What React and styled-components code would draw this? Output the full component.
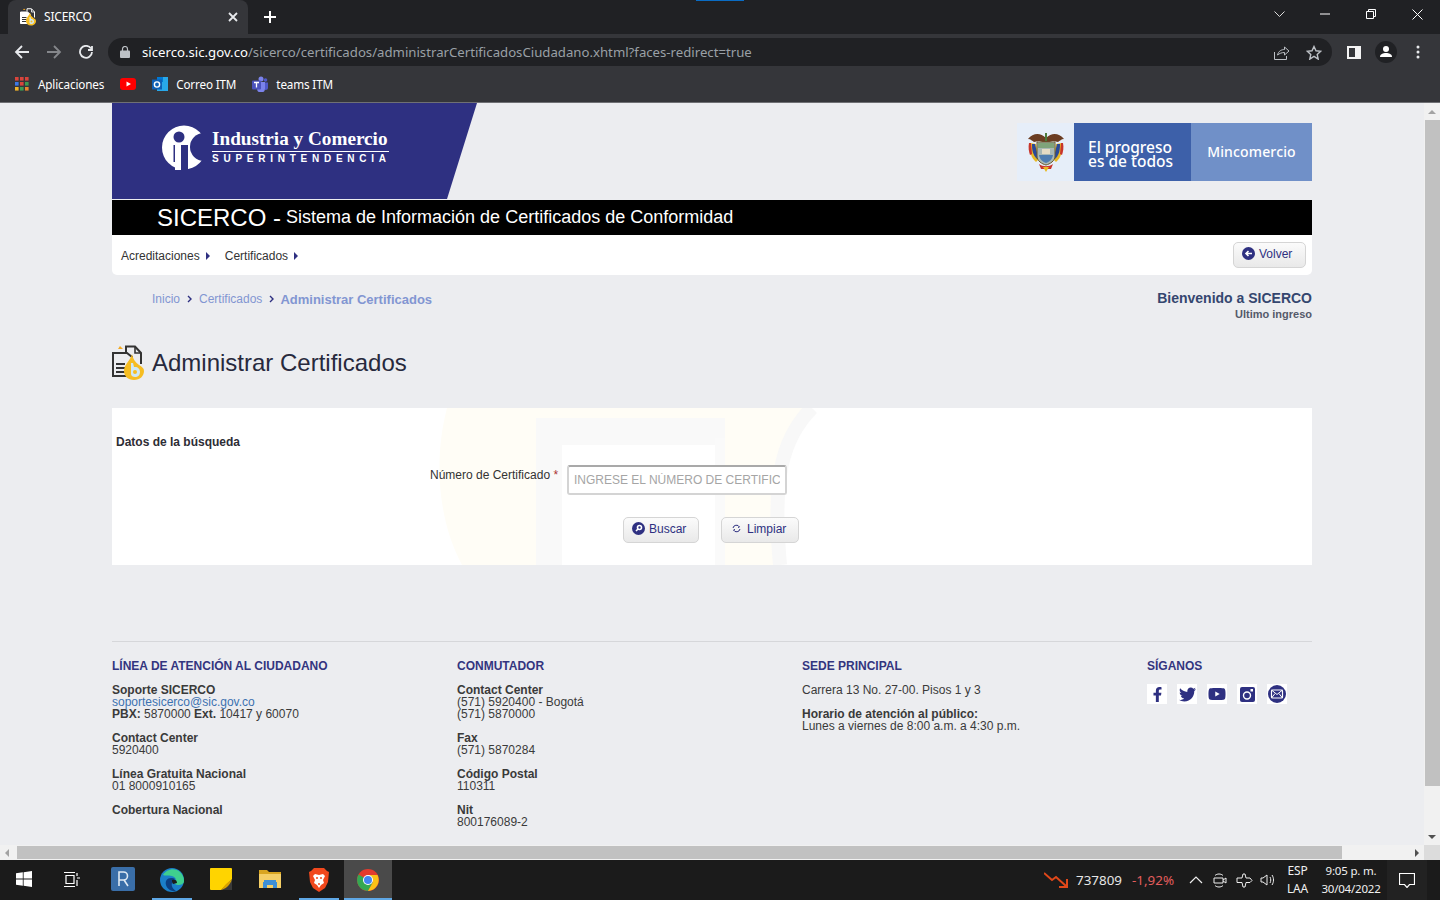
import React from 'react';
import styled, { createGlobalStyle } from 'styled-components';
import { FaFacebookF, FaTwitter, FaYoutube } from 'react-icons/fa';

const navy = '#2e3081';
const uiFont = '"Noto Sans", "Open Sans", sans-serif';
const pageFont = '"Liberation Sans", Arial, sans-serif';

const GlobalStyle = createGlobalStyle`
  html, body {
    margin: 0;
    padding: 0;
    width: 1440px;
    height: 900px;
    overflow: hidden;
    background: #ecedf0;
  }
  * { box-sizing: border-box; }
`;

const Screen = styled.div`
  position: relative;
  width: 1440px;
  height: 900px;
  display: flex;
  flex-direction: column;
  font-family: ${pageFont};
`;

/* browser chrome */
const TabStrip = styled.div`
  height: 34px;
  background: #202124;
  display: flex;
  align-items: flex-end;
  padding-left: 8px;
  color: #fff;
  font-family: ${uiFont};
`;
const Tab = styled.div`
  width: 240px;
  height: 34px;
  background: #35363a;
  border-radius: 8px 8px 0 0;
  display: flex;
  align-items: center;
  padding: 0 10px 1px 12px;
  font-size: 12px;
  gap: 8px;
`;
const TabTitle = styled.span`
  flex: 1;
  letter-spacing: -0.2px;
`;
const NewTab = styled.div`
  width: 44px;
  height: 34px;
  display: flex;
  align-items: center;
  justify-content: center;
`;
const WindowButtons = styled.div`
  margin-left: auto;
  height: 28px;
  display: flex;
  align-items: center;
  align-self: flex-start;
`;
const WindowButton = styled.div`
  width: 46px;
  height: 28px;
  display: flex;
  align-items: center;
  justify-content: center;
`;
const CaptureMark = styled.div`
  position: absolute;
  left: 696px;
  top: 0;
  width: 48px;
  height: 1px;
  background: #0a6cc4;
`;
const Toolbar = styled.div`
  height: 34px;
  background: #35363a;
  display: flex;
  align-items: center;
  padding: 2px 0 0 6px;
`;
const NavIcon = styled.div`
  width: 32px;
  height: 32px;
  display: flex;
  align-items: center;
  justify-content: center;
`;
const Omnibox = styled.div`
  width: 1224px;
  height: 28px;
  margin-left: 6px;
  background: #202124;
  border-radius: 14px;
  display: flex;
  align-items: center;
  padding: 0 2px 0 12px;
  font-family: ${uiFont};
  font-size: 13.2px;
  color: #9aa0a6;
`;
const UrlHost = styled.span`
  margin-left: 12px;
  color: #fff;
`;
const OmniSpacer = styled.div`
  flex: 1;
`;
const OmniIcon = styled.div`
  width: 32px;
  display: flex;
  justify-content: center;
`;
const ToolbarRight = styled.div`
  display: flex;
  align-items: center;
  margin-left: 6px;
`;
const Bookmarks = styled.div`
  height: 35px;
  background: #35363a;
  border-bottom: 1px solid #6f7074;
  display: flex;
  align-items: center;
  padding: 0 0 3px 15px;
  color: #fff;
  font-family: ${uiFont};
  font-size: 11.7px;
  letter-spacing: -0.15px;
`;
const Bookmark = styled.div`
  display: flex;
  align-items: center;
  gap: ${p => p.$inner || 8}px;
  margin-right: ${p => p.$gap}px;
  white-space: nowrap;
`;

/* viewport + scrollbars */
const Middle = styled.div`
  flex: 1;
  display: flex;
  min-height: 0;
`;
const Page = styled.main`
  flex: 1;
  background: #ecedf0;
  padding-left: 112px;
  overflow: hidden;
`;
const Container = styled.div`
  width: 1200px;
`;
const VScroll = styled.div`
  width: 16px;
  background: #f1f1f1;
  display: flex;
  flex-direction: column;
  align-items: center;
  padding: 7px 0 6px;
`;
const VThumb = styled.div`
  width: 15px;
  height: 666px;
  background: #c1c1c1;
  margin: 6px 0 auto;
`;
const HScrollRow = styled.div`
  height: 15px;
  display: flex;
  background: #f1f1f1;
`;
const HTrack = styled.div`
  width: 1424px;
  height: 15px;
  display: flex;
  align-items: center;
  justify-content: space-between;
  padding: 0 5px;
`;
const HThumb = styled.div`
  width: 1325px;
  height: 13px;
  background: #c1c1c1;
  margin-left: 3px;
  margin-right: 68px;
`;
const Corner = styled.div`
  width: 16px;
  background: #dcdcdc;
`;
const ArrowV = styled.div`
  width: 0;
  height: 0;
  border-left: 4px solid transparent;
  border-right: 4px solid transparent;
  ${p => p.$up ? 'border-bottom: 4px solid #a3a3a3;' : 'border-top: 4px solid #505050;'}
`;
const ArrowH = styled.div`
  width: 0;
  height: 0;
  border-top: 4px solid transparent;
  border-bottom: 4px solid transparent;
  ${p => p.$left ? 'border-right: 4px solid #a3a3a3;' : 'border-left: 4px solid #505050;'}
`;

/* site header */
const Masthead = styled.header`
  height: 97px;
  display: flex;
  justify-content: space-between;
`;
const Brand = styled.div`
  width: 365px;
  height: 96px;
  background: ${navy};
  clip-path: polygon(0 0, 100% 0, 335px 100%, 0 100%);
  display: flex;
  align-items: flex-start;
  padding: 22px 0 0 50px;
  color: #fff;
  gap: 8px;
`;
const BrandText = styled.div`
  display: flex;
  flex-direction: column;
  width: 177px;
  margin-top: 3px;
`;
const BrandName = styled.div`
  font-family: "Liberation Serif", serif;
  font-weight: 700;
  font-size: 19.2px;
  line-height: 22px;
  white-space: nowrap;
  border-bottom: 1px solid #fff;
  height: 24px;
`;
const BrandSub = styled.div`
  font-size: 10px;
  font-weight: 700;
  letter-spacing: 4.75px;
  line-height: 14px;
  white-space: nowrap;
`;
const GovBanner = styled.div`
  margin-top: 20px;
  height: 58px;
  display: flex;
  color: #fff;
  font-family: ${uiFont};
`;
const Emblem = styled.div`
  width: 57px;
  background: #e6eef9;
  display: flex;
  align-items: center;
  justify-content: center;
`;
const Slogan = styled.div`
  width: 117px;
  background: #3d60a9;
  padding: 17px 0 0 14px;
  font-size: 15.5px;
  font-weight: 500;
  line-height: 14px;
`;
const Ministry = styled.div`
  width: 121px;
  background: #7090c8;
  display: flex;
  align-items: center;
  justify-content: center;
  padding-bottom: 2px;
  font-size: 14px;
  letter-spacing: 0.15px;
  font-weight: 500;
`;
const BlackBar = styled.div`
  height: 35px;
  background: #000;
  color: #fff;
  display: flex;
  align-items: center;
  padding-left: 45px;
  font-size: 18px;
  white-space: pre;
`;
const BarTitle = styled.span`
  font-size: 24px;
`;
const NavBar = styled.nav`
  height: 40px;
  background: #fff;
  border-radius: 0 0 5px 5px;
  display: flex;
  align-items: center;
  padding: 0 6px 0 9px;
  font-size: 12px;
  color: #333;
`;
const NavItem = styled.span`
  display: flex;
  align-items: center;
  gap: 6px;
  margin-right: 15px;
  padding-top: 1px;
`;
const Caret = styled.span`
  width: 0;
  height: 0;
  border-top: 4px solid transparent;
  border-bottom: 4px solid transparent;
  border-left: 4px solid ${navy};
`;
const SoftButton = styled.button`
  width: ${p => p.$w}px;
  height: 26px;
  border: 1px solid #d5d5d5;
  border-radius: 5px;
  background: linear-gradient(#fbfbfb, #e9e9e9);
  color: ${navy};
  font-family: ${pageFont};
  font-size: 12px;
  display: flex;
  align-items: center;
  gap: 4px;
  padding: 0 0 3px 8px;
`;
const NavPush = styled.div`
  flex: 1;
`;

/* crumbs + title */
const CrumbRow = styled.div`
  height: 50px;
  display: flex;
  justify-content: space-between;
  align-items: flex-start;
`;
const Crumbs = styled.div`
  margin: 17px 0 0 40px;
  display: flex;
  align-items: center;
  font-size: 12px;
  height: 14px;
  color: #8296d2;
`;
const CrumbSep = styled.span`
  width: ${p => p.$w}px;
  display: flex;
  justify-content: center;
`;
const CrumbCurrent = styled.span`
  font-weight: 700;
  font-size: 13px;
`;
const Welcome = styled.div`
  margin-top: 15px;
  text-align: right;
`;
const WelcomeTitle = styled.div`
  font-size: 14px;
  font-weight: 700;
  line-height: 17px;
  color: #34466f;
`;
const WelcomeSub = styled.div`
  font-size: 11px;
  font-weight: 700;
  line-height: 15px;
  color: #555a6a;
`;
const TitleRow = styled.div`
  height: 83px;
  display: flex;
  align-items: flex-start;
  padding-top: 20px;
  gap: 8px;
`;
const PageTitle = styled.h1`
  margin: 3px 0 0;
  font-size: 24px;
  font-weight: 400;
  line-height: 30px;
  color: #27293d;
`;

/* form panel */
const Panel = styled.section`
  position: relative;
  height: 157px;
  background: #fff;
  overflow: hidden;
  padding: 27px 4px 0;
`;
const Watermark = styled.svg`
  position: absolute;
  left: 0;
  top: 0;
`;
const PanelBody = styled.div`
  position: relative;
`;
const PanelTitle = styled.div`
  font-size: 12px;
  font-weight: 700;
  line-height: 14px;
  color: #2d2d35;
`;
const FormRow = styled.div`
  display: flex;
  margin: 16px 0 0 314px;
`;
const FieldLabel = styled.label`
  font-size: 12px;
  line-height: 14px;
  padding-top: 3px;
  color: #333;
  width: 137px;
  white-space: pre;
`;
const Required = styled.span`
  color: #a33;
`;
const TextInput = styled.input`
  width: 220px;
  height: 30px;
  border: 2px solid #d4d4d4;
  border-top-color: #a9a9a9;
  border-radius: 3px;
  padding: 0 5px;
  font-family: ${pageFont};
  font-size: 12px;
  background: #fff;
  &::placeholder {
    color: #a5a5a5;
    opacity: 1;
  }
`;
const ButtonRow = styled.div`
  display: flex;
  gap: 22px;
  margin: 22px 0 0 507px;
`;

/* footer */
const Footer = styled.footer`
  margin-top: 76px;
  border-top: 1px solid #d6d7da;
  padding-top: 17px;
  display: grid;
  grid-template-columns: 345px 345px 345px 165px;
  font-size: 12px;
  line-height: 12px;
  color: #3a3a3a;
`;
const FooterHeading = styled.h4`
  margin: 0 0 11px;
  font-size: 12px;
  line-height: 14px;
  font-weight: 700;
  color: #33357f;
  text-transform: uppercase;
`;
const FooterGroup = styled.div`
  margin-bottom: 12px;
  white-space: nowrap;
`;
const Strong = styled.b`
  color: #3a3a3a;
  display: ${p => p.$inline ? 'inline' : 'block'};
`;
const MailLink = styled.a`
  display: block;
  color: #3c72b0;
`;
const SocialRow = styled.div`
  display: flex;
  gap: 10px;
  margin-top: 1px;
`;
const SocialIcon = styled.a`
  width: 20px;
  height: 20px;
  background: #fff;
  color: ${navy};
  display: flex;
  align-items: center;
  justify-content: center;
  font-size: ${p => p.$size || 15}px;
`;

/* windows taskbar */
const Taskbar = styled.div`
  height: 40px;
  background: #1b1b1b;
  display: flex;
  align-items: center;
  color: #fff;
  font-family: ${uiFont};
`;
const TaskSlot = styled.div`
  width: ${p => p.$w || 48}px;
  height: 40px;
  margin-left: ${p => p.$ml || 0}px;
  display: flex;
  align-items: center;
  justify-content: center;
  background: ${p => p.$active ? '#4a4a4a' : 'transparent'};
  border-bottom: 2px solid ${p => p.$open ? '#5fa8e6' : 'transparent'};
  padding-top: ${p => p.$open ? '2px' : '0'};
`;
const Tray = styled.div`
  margin-left: auto;
  display: flex;
  align-items: center;
  height: 40px;
`;
const Ticker = styled.span`
  font-size: 13.4px;
  margin-left: 7px;
  color: #e6e6e6;
`;
const TickerDelta = styled.span`
  font-size: 13.4px;
  margin-left: 10px;
  color: #e35d5d;
  width: 52px;
`;
const TrayIcon = styled.div`
  width: 24px;
  display: flex;
  justify-content: center;
`;
const TrayText = styled.div`
  width: ${p => p.$w}px;
  text-align: center;
  font-size: ${p => p.$size}px;
  line-height: 18px;
  letter-spacing: -0.2px;
  color: #f0f0f0;
`;
const Notify = styled.div`
  width: 40px;
  height: 40px;
  margin-right: 13px;
  background: #222;
  display: flex;
  align-items: center;
  justify-content: center;
`;

const DocIcon = ({ size = 32, light }) => {
  const ink = light ? '#fff' : '#333';
  return (
    <svg width={size} height={size * 36 / 32} viewBox="0 0 32 36" fill="none">
      <path d="M8 1l-2 3h5z" fill="#f2a922" />
      <path d="M14 7V1.5h9l6 6.5v11" stroke={ink} strokeWidth="2" fill="none" />
      <path d="M23 2v6h6" stroke={ink} strokeWidth="1.6" />
      <path d="M1 8h14l5 4v19H1z" stroke={ink} strokeWidth="2" fill={light ? '#fff' : 'none'} />
      <path d="M4 19h9M4 23h11M4 27h9" stroke={light ? '#333' : ink} strokeWidth="2" />
      <path d="M20 9c-1 6-8 10-8 17 0 5 4 9 10 9s10-4 10-9c0-3-2-4-5-6-4-3-6-6-7-11z" fill="#f6bd22" />
      <path d="M19 18v11c0 2 2 3 4 3 3 0 5-2 5-5s-2-5-5-5h-1l-1-4z" fill="#cfe8f5" />
      <circle cx="23" cy="27" r="2" fill="#f6bd22" />
    </svg>
  );
};

const ColombiaEmblem = () => (
  <svg width="40" height="42" viewBox="0 0 38 42">
    <path d="M19 7C13 1 6 2 1 8c3 0 4 2 6 3l5-1 7 2 7-2 5 1c2-1 3-3 6-3-5-6-12-7-18-1z" fill="#6b3d22" />
    <path d="M18 2h2v8h-2z" fill="#4a7a3a" />
    <path d="M3 12c-1 8 1 15 6 19l3-3-3-15z" fill="#e8b923" />
    <path d="M35 12c1 8-1 15-6 19l-3-3 3-15z" fill="#e8b923" />
    <path d="M5 13c0 7 1 11 5 15l1-2-3-13z" fill="#2a4a9a" />
    <path d="M33 13c0 7-1 11-5 15l-1-2 3-13z" fill="#2a4a9a" />
    <path d="M2 12c-1 5 0 9 1 12l2-1-1-11z" fill="#c8352c" />
    <path d="M36 12c1 5 0 9-1 12l-2-1 1-11z" fill="#c8352c" />
    <path d="M10 11h18v14c0 5-5 8-9 9-4-1-9-4-9-9z" fill="#a9b8b4" stroke="#6b5a2c" strokeWidth="1" />
    <path d="M11 12h16v5H11z" fill="#7fa37a" />
    <path d="M12 24h14c-1 5-4 7-7 8-3-1-6-3-7-8z" fill="#4f7db0" />
    <path d="M15 18h8v5h-8z" fill="#e5dcc4" />
    <path d="M12 33c4 3 10 3 14 0l-2 5h-10z" fill="#c8352c" />
    <path d="M16 36h6l-3 5z" fill="#e8b923" />
  </svg>
);

const SiteLogo = () => (
  <svg width="42" height="45" viewBox="0 0 42 45">
    <circle cx="22" cy="22.5" r="22" fill="#fff" />
    <circle cx="42" cy="22" r="14" fill={navy} />
    <circle cx="17" cy="12" r="5.500" fill={navy} />
    <rect x="11.500" y="20" width="1.500" height="17" fill={navy} />
    <rect x="19" y="20" width="7" height="25" fill={navy} />
    <rect x="13" y="37" width="6" height="8" fill="#fff" />
  </svg>
);

const Line = ({ d, w = 16, h = 16, color = '#fff', sw = 2, vb }) => (
  <svg width={w} height={h} viewBox={vb || `0 0 ${w} ${h}`} fill="none" stroke={color} strokeWidth={sw}>
    <path d={d} />
  </svg>
);

const AppsGrid = () => {
  const colors = ['#d9453c', '#d9453c', '#d9453c', '#3b78e7', '#d9453c', '#3b9a52', '#f0b429', '#3b9a52', '#e8862e'];
  return (
    <svg width="14" height="14" viewBox="0 0 14 14">
      {colors.map((c, i) => (
        <rect key={i} x={(i % 3) * 5} y={Math.floor(i / 3) * 5} width="3.6" height="3.6" fill={c} />
      ))}
    </svg>
  );
};

const YoutubeMark = () => (
  <svg width="16" height="12" viewBox="0 0 16 12">
    <rect width="16" height="12" rx="3" fill="#f00" />
    <path d="M6.500 3.500L11 6l-4.500 2.500z" fill="#fff" />
  </svg>
);

const OutlookMark = () => (
  <svg width="16" height="16" viewBox="0 0 16 16">
    <rect x="5" y="1" width="11" height="14" fill="#28a8ea" />
    <rect x="5" y="1" width="6" height="5" fill="#0078d4" />
    <rect x="0" y="3.500" width="10" height="10" fill="#0f5fb5" />
    <circle cx="5" cy="8.500" r="2.600" fill="none" stroke="#fff" strokeWidth="1.400" />
  </svg>
);

const TeamsMark = () => (
  <svg width="16" height="16" viewBox="0 0 16 16">
    <circle cx="9" cy="3" r="2.500" fill="#7b83eb" />
    <circle cx="13.500" cy="4" r="1.800" fill="#5059c9" />
    <path d="M11 6.500h5v5a2.500 2.500 0 0 1-5 0z" fill="#5059c9" />
    <path d="M5 6h8v6.500a4 4 0 0 1-8 0z" fill="#7b83eb" />
    <rect x="0" y="4.500" width="9" height="9" rx="1" fill="#4b53bc" />
    <path d="M2 6.500h5M4.500 6.500v5" stroke="#fff" strokeWidth="1.300" />
  </svg>
);

const RoundGlyph = ({ d }) => (
  <svg width="13" height="13" viewBox="0 0 13 13">
    <circle cx="6.500" cy="6.500" r="6.500" fill={navy} />
    <path d={d} fill="none" stroke="#fff" strokeWidth="1.600" />
  </svg>
);

const WinLogo = () => (
  <svg width="16" height="16" viewBox="0 0 16 16" fill="#fff">
    <path d="M0 2.300l6.800-1v6.300H0zM7.600 1.200L16 0v7.600H7.600zM0 8.400h6.800v6.300l-6.800-1zM7.600 8.400H16V16l-8.400-1.200z" />
  </svg>
);

const RStudio = () => (
  <svg width="24" height="24" viewBox="0 0 24 24">
    <rect width="24" height="24" rx="2" fill="#3a6ea8" />
    <path d="M8 19V5h4.500a4 4 0 0 1 0 8H8M13 13l4 6" fill="none" stroke="#dfe9f3" strokeWidth="1.600" />
  </svg>
);

const EdgeMark = () => (
  <svg width="24" height="24" viewBox="0 0 24 24">
    <circle cx="12" cy="12" r="12" fill="#1b7fc9" />
    <path d="M3 7c3-6 12-8 17-3 3 3 4 6 4 9 0 3-3 4-6 4-2 0-3-1-3-2 2-2 1-6-3-7-4-1-7 0-9-1z" fill="#3fcf8e" />
    <path d="M11 10c-4 0-6 3-5 7s6 7 10 6c-3-2-5-5-4-8 1-2 2-3 3-4-1-1-2-1-4-1z" fill="#0c3f82" />
    <path d="M12 12c3-1 5 0 5 3l-4 1c-1-1-1-3-1-4z" fill="#1b1b1b" />
  </svg>
);

const StickyNote = () => (
  <svg width="22" height="22" viewBox="0 0 22 22">
    <rect width="22" height="22" rx="1" fill="#ffd400" />
    <path d="M11 22l11-11v11z" fill="#3a3a3a" />
    <path d="M11 22c4-1 9-4 11-11l-6 5z" fill="#d9a300" />
  </svg>
);

const Explorer = () => (
  <svg width="22" height="20" viewBox="0 0 22 20">
    <path d="M0 1h8l2 2h12v16H0z" fill="#d9a520" />
    <path d="M0 5h22v14H0z" fill="#f5cf66" />
    <path d="M4 13h14v6h-4v-3H8v3H4z" fill="#3d8fd6" />
    <path d="M5 11h12v2H5z" fill="#3d8fd6" />
  </svg>
);

const Brave = () => (
  <svg width="20" height="24" viewBox="0 0 20 24">
    <path d="M5 0h10l3 3 2 1-1 10-3 6-6 4-6-4-3-6L0 4l2-1z" fill="#f1481d" />
    <path d="M6 6l4 1 4-1 2 2-2 4 1 3-3 2-2 3-2-3-3-2 1-3-2-4z" fill="#fff" />
    <path d="M7 10h2M11 10h2M10 15v2" stroke="#f1481d" strokeWidth="1.400" />
  </svg>
);

const ChromeMark = () => (
  <svg width="22" height="22" viewBox="0 0 22 22">
    <circle cx="11" cy="11" r="11" fill="#e33b2e" />
    <path d="M11 11L1.500 5.500A11 11 0 0 0 11 22l5-9z" fill="#34a853" />
    <path d="M11 6h9.500A11 11 0 0 1 11 22l5-9z" fill="#fbc116" />
    <circle cx="11" cy="11" r="5" fill="#fff" />
    <circle cx="11" cy="11" r="4" fill="#4285f4" />
  </svg>
);

export default function App() {
  return (
    <Screen>
      <GlobalStyle />
      <CaptureMark />

      <TabStrip>
        <Tab>
          <DocIcon size={16} light />
          <TabTitle>SICERCO</TabTitle>
          <Line w={10} h={10} sw={1.800} color="#e8eaed" d="M1 1l8 8M9 1l-8 8" />
        </Tab>
        <NewTab>
          <Line w={12} h={12} sw={2} d="M6 0v12M0 6h12" />
        </NewTab>
        <WindowButtons>
          <WindowButton><Line w={11} h={7} sw={1} color="#dcdcdc" d="M.5.500l5 5 5-5" /></WindowButton>
          <WindowButton><Line w={10} h={2} sw={1} d="M0 1h10" /></WindowButton>
          <WindowButton><Line w={10} h={10} sw={1} d="M.5 2.500h7v7h-7zM2.500 2.500v-2h7v7h-2" /></WindowButton>
          <WindowButton><Line w={11} h={11} sw={1} d="M.5.500l10 10M10.500.500l-10 10" /></WindowButton>
        </WindowButtons>
      </TabStrip>

      <Toolbar>
        <NavIcon><Line w={16} h={14} sw={1.800} color="#e8eaed" d="M15 7H2M8 1L2 7l6 6" /></NavIcon>
        <NavIcon><Line w={16} h={14} sw={1.800} color="#85878b" d="M1 7h13M8 1l6 6-6 6" /></NavIcon>
        <NavIcon><Line w={14} h={14} sw={1.800} color="#e8eaed" d="M12 3.500A6 6 0 1 0 13 7M13 1v4H9" /></NavIcon>
        <Omnibox>
          <svg width="10" height="12" viewBox="0 0 10 12">
            <rect y="4.500" width="10" height="7.500" rx="1" fill="#bdc1c6" />
            <path d="M2.500 5V3a2.500 2.500 0 0 1 5 0v2" fill="none" stroke="#bdc1c6" strokeWidth="1.200" />
          </svg>
          <UrlHost>sicerco.sic.gov.co</UrlHost>
          /sicerco/certificados/administrarCertificadosCiudadano.xhtml?faces-redirect=true
          <OmniSpacer />
          <OmniIcon>
            <Line w={16} h={15} sw={1} color="#bdc1c6" d="M.5 7v7.500h12V11M3.500 10c1-4 4-5.500 7-5.500V2L15 6l-4.500 4V7.500c-3 0-5 1-7 2.500z" />
          </OmniIcon>
          <OmniIcon>
            <Line w={16} h={15} sw={1.400} color="#bdc1c6" d="M8 1.500l2 4.300 4.700.5-3.500 3.200 1 4.600L8 11.300l-4.200 2.800 1-4.600L1.300 6.300 6 5.800z" />
          </OmniIcon>
        </Omnibox>
        <ToolbarRight>
          <NavIcon>
            <svg width="14" height="13" viewBox="0 0 14 13">
              <rect width="14" height="13" fill="#f4f4f4" />
              <rect x="2" y="2" width="6" height="9" fill="#35363a" />
            </svg>
          </NavIcon>
          <NavIcon>
            <svg width="22" height="22" viewBox="0 0 22 22">
              <circle cx="11" cy="11" r="11" fill="#202124" />
              <circle cx="11" cy="8" r="3" fill="#fff" />
              <path d="M5 16c0-3 3-4 6-4s6 1 6 4z" fill="#fff" />
            </svg>
          </NavIcon>
          <NavIcon>
            <svg width="4" height="14" viewBox="0 0 4 14" fill="#e8eaed">
              <circle cx="2" cy="2" r="1.500" /><circle cx="2" cy="7" r="1.500" /><circle cx="2" cy="12" r="1.500" />
            </svg>
          </NavIcon>
        </ToolbarRight>
      </Toolbar>

      <Bookmarks>
        <Bookmark $gap={16} $inner={9}><AppsGrid />Aplicaciones</Bookmark>
        <Bookmark $gap={16}><YoutubeMark /></Bookmark>
        <Bookmark $gap={16}><OutlookMark />Correo ITM</Bookmark>
        <Bookmark $gap={0}><TeamsMark />teams ITM</Bookmark>
      </Bookmarks>

      <Middle>
        <Page>
          <Container>
            <Masthead>
              <Brand>
                <SiteLogo />
                <BrandText>
                  <BrandName>Industria y Comercio</BrandName>
                  <BrandSub>SUPERINTENDENCIA</BrandSub>
                </BrandText>
              </Brand>
              <GovBanner>
                <Emblem><ColombiaEmblem /></Emblem>
                <Slogan>El progreso<br />es de todos</Slogan>
                <Ministry>Mincomercio</Ministry>
              </GovBanner>
            </Masthead>

            <BlackBar><BarTitle>SICERCO -</BarTitle> Sistema de Información de Certificados de Conformidad</BlackBar>

            <NavBar>
              <NavItem>Acreditaciones <Caret /></NavItem>
              <NavItem>Certificados <Caret /></NavItem>
              <NavPush />
              <SoftButton type="button" $w={73}>
                <RoundGlyph d="M10 6.500H4M6.500 4L4 6.500 6.500 9" />
                Volver
              </SoftButton>
            </NavBar>

            <CrumbRow>
              <Crumbs>
                Inicio
                <CrumbSep $w={19}><Line w={5} h={8} sw={1.400} color={navy} d="M1 1l3 3-3 3" /></CrumbSep>
                Certificados
                <CrumbSep $w={18}><Line w={5} h={8} sw={1.400} color={navy} d="M1 1l3 3-3 3" /></CrumbSep>
                <CrumbCurrent>Administrar Certificados</CrumbCurrent>
              </Crumbs>
              <Welcome>
                <WelcomeTitle>Bienvenido a SICERCO</WelcomeTitle>
                <WelcomeSub>Ultimo ingreso</WelcomeSub>
              </Welcome>
            </CrumbRow>

            <TitleRow>
              <DocIcon size={32} />
              <PageTitle>Administrar Certificados</PageTitle>
            </TitleRow>

            <Panel>
              <Watermark width="1200" height="157" viewBox="0 0 1200 157">
                <path d="M335 0h365c-30 30-40 70-32 157H350C325 110 322 50 335 0z" fill="#fffdf6" />
                <path d="M424 10h189v147H424z" fill="#f9f9f9" />
                <path d="M450 37h153v120H450z" fill="#fff" />
                <path d="M603 30h10v127h-10z" fill="#fafafa" />
                <path d="M700 0c-30 30-40 70-32 157" fill="none" stroke="#f8f8f8" strokeWidth="14" />
              </Watermark>
              <PanelBody>
                <PanelTitle>Datos de la búsqueda</PanelTitle>
                <FormRow>
                  <FieldLabel>Número de Certificado <Required>*</Required></FieldLabel>
                  <TextInput placeholder="INGRESE EL NÚMERO DE CERTIFICADO" />
                </FormRow>
                <ButtonRow>
                  <SoftButton type="button" $w={76}>
                    <RoundGlyph d="M4 9l2-2M7.500 5.500m-2 0a2 2 0 1 0 4 0a2 2 0 1 0-4 0" />
                    Buscar
                  </SoftButton>
                  <SoftButton type="button" $w={78}>
                    <svg width="13" height="13" viewBox="0 0 13 13" fill="none" stroke={navy} strokeWidth="1">
                      <path d="M3 6a3.500 3.500 0 0 1 6.500-1L8 5.500M10 7a3.500 3.500 0 0 1-6.500 1L5 7.500" />
                    </svg>
                    Limpiar
                  </SoftButton>
                </ButtonRow>
              </PanelBody>
            </Panel>

            <Footer>
              <div>
                <FooterHeading>Línea de atención al ciudadano</FooterHeading>
                <FooterGroup>
                  <Strong>Soporte SICERCO</Strong>
                  <MailLink>soportesicerco@sic.gov.co</MailLink>
                  <Strong $inline>PBX:</Strong> 5870000 <Strong $inline>Ext.</Strong> 10417 y 60070
                </FooterGroup>
                <FooterGroup><Strong>Contact Center</Strong>5920400</FooterGroup>
                <FooterGroup><Strong>Línea Gratuita Nacional</Strong>01 8000910165</FooterGroup>
                <FooterGroup><Strong>Cobertura Nacional</Strong></FooterGroup>
              </div>
              <div>
                <FooterHeading>Conmutador</FooterHeading>
                <FooterGroup><Strong>Contact Center</Strong>(571) 5920400 - Bogotá<br />(571) 5870000</FooterGroup>
                <FooterGroup><Strong>Fax</Strong>(571) 5870284</FooterGroup>
                <FooterGroup><Strong>Código Postal</Strong>110311</FooterGroup>
                <FooterGroup><Strong>Nit</Strong>800176089-2</FooterGroup>
              </div>
              <div>
                <FooterHeading>Sede principal</FooterHeading>
                <FooterGroup>Carrera 13 No. 27-00. Pisos 1 y 3</FooterGroup>
                <FooterGroup><Strong>Horario de atención al público:</Strong>Lunes a viernes de 8:00 a.m. a 4:30 p.m.</FooterGroup>
              </div>
              <div>
                <FooterHeading>Síganos</FooterHeading>
                <SocialRow>
                  <SocialIcon><FaFacebookF /></SocialIcon>
                  <SocialIcon $size={17}><FaTwitter /></SocialIcon>
                  <SocialIcon $size={18}><FaYoutube /></SocialIcon>
                  <SocialIcon>
                    <svg width="15" height="15" viewBox="0 0 15 15">
                      <rect width="15" height="15" rx="2" fill={navy} />
                      <circle cx="7" cy="8.500" r="3.500" fill="none" stroke="#fff" strokeWidth="1.400" />
                      <rect x="10.500" y="2" width="2.500" height="2.500" fill="#fff" />
                    </svg>
                  </SocialIcon>
                  <SocialIcon>
                    <svg width="18" height="18" viewBox="0 0 18 18">
                      <circle cx="9" cy="9" r="9" fill={navy} />
                      <rect x="3.500" y="5" width="11" height="8" rx="1" fill="none" stroke="#fff" strokeWidth="1.200" />
                      <path d="M3.500 5L9 9.500 14.500 5M3.500 13L7 8.500M14.500 13L11 8.500" fill="none" stroke="#fff" strokeWidth="1" />
                    </svg>
                  </SocialIcon>
                </SocialRow>
              </div>
            </Footer>
          </Container>
        </Page>
        <VScroll>
          <ArrowV $up />
          <VThumb />
          <ArrowV />
        </VScroll>
      </Middle>

      <HScrollRow>
        <HTrack>
          <ArrowH $left />
          <HThumb />
          <ArrowH />
        </HTrack>
        <Corner />
      </HScrollRow>

      <Taskbar>
        <TaskSlot><WinLogo /></TaskSlot>
        <TaskSlot>
          <Line w={16} h={15} sw={1.200} d="M0 .5h11M0 14.500h11M2 3.500h8v8H2zM13 1v3M13 6h3M13 8v6" />
        </TaskSlot>
        <TaskSlot $w={54}><RStudio /></TaskSlot>
        <TaskSlot $w={40} $ml={2} $open><EdgeMark /></TaskSlot>
        <TaskSlot $w={58}><StickyNote /></TaskSlot>
        <TaskSlot $w={40}><Explorer /></TaskSlot>
        <TaskSlot $w={40} $ml={9} $open><Brave /></TaskSlot>
        <TaskSlot $ml={5} $active $open><ChromeMark /></TaskSlot>
        <Tray>
          <Line w={25} h={17} sw={2} color="#e0481a" d="M0 1l8 7 4-3 10 9M23 7v8h-8" />
          <Ticker>737809</Ticker>
          <TickerDelta>-1,92%</TickerDelta>
          <TrayIcon><Line w={14} h={8} sw={1.200} color="#eee" d="M1 7l6-6 6 6" /></TrayIcon>
          <TrayIcon><Line w={14} h={15} sw={1} color="#eee" d="M2 2.500c2-2 6-2 8 0M2 12.500c2 2 6 2 8 0M1 5h9v5H1zM10 7l3-2v5l-3-2" /></TrayIcon>
          <TrayIcon><Line w={17} h={15} sw={1} color="#eee" d="M1 5h5L7 1h2l1 4h4l2 2.500-2 2h-4l-1 4.500H7L6 9.500H1z" /></TrayIcon>
          <TrayIcon><Line w={16} h={14} sw={1} color="#eee" d="M1 5h2l4-3v10L3 9H1zM10 4c1 2 1 4 0 6M12 2c2 3 2 7 0 10" /></TrayIcon>
          <TrayText $w={35} $size={12}>ESP<br />LAA</TrayText>
          <TrayText $w={72} $size={11.500}>9:05 p. m.<br />30/04/2022</TrayText>
          <Notify><Line w={16} h={15} sw={1.200} d="M.5.500h15v11h-5l-2.500 3-2.500-3h-5z" /></Notify>
        </Tray>
      </Taskbar>
    </Screen>
  );
}
